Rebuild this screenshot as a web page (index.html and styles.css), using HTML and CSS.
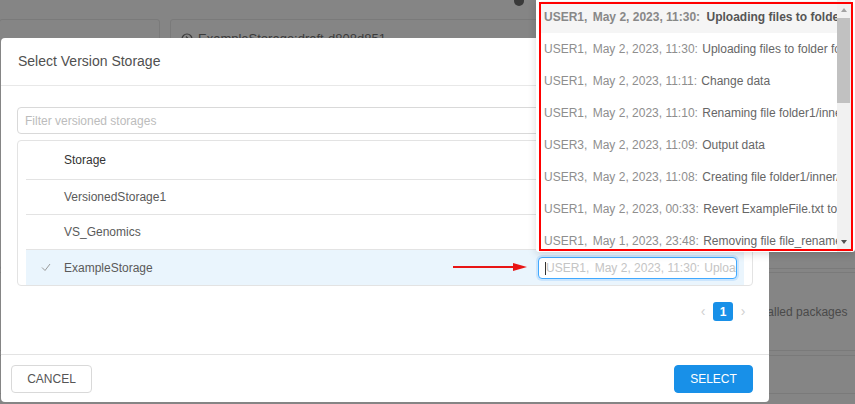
FILE: index.html
```html
<!DOCTYPE html>
<html lang="en">
<head>
<meta charset="utf-8">
<title>Select Version Storage</title>
<link rel="stylesheet" href="styles.css">
</head>
<body>
<div class="page">
  <div class="topbar"><span class="dot"></span></div>
  <div class="cards">
    <div class="card card-a"></div>
    <div class="card card-b">
      <div class="card-title">
        <svg class="card-icon" width="12" height="12" viewBox="0 0 12 12"><circle cx="6" cy="6" r="5" fill="none" stroke="#3b3b3b" stroke-width="1.2"/><path d="M5 3.5 L7.5 6 L5 8.5" fill="none" stroke="#3b3b3b" stroke-width="1.2"/></svg>
        <span>ExampleStorage:draft-d808d851</span>
      </div>
    </div>
  </div>
  <div class="panel">
    <div class="panel-row"><span class="pkg">Installed packages</span></div>
  </div>
  <div class="panel panel-2"></div>
</div>

<div class="modal">
  <div class="modal-header">Select Version Storage</div>
  <div class="modal-body">
    <input class="filter" type="text" placeholder="Filter versioned storages">
    <div class="table">
      <div class="row head">
        <span class="c-check"></span><span class="c-name">Storage</span><span class="c-ver"></span>
      </div>
      <div class="row">
        <span class="c-check"></span><span class="c-name">VersionedStorage1</span><span class="c-ver"></span>
      </div>
      <div class="row">
        <span class="c-check"></span><span class="c-name">VS_Genomics</span><span class="c-ver"></span>
      </div>
      <div class="row selected">
        <span class="c-check"><svg width="10" height="9" viewBox="0 0 10 9"><polyline points="1,4.5 4,7.5 9,1" fill="none" stroke="#9a9a9a" stroke-width="1"/></svg></span>
        <span class="c-name">ExampleStorage</span>
        <span class="c-ver">
          <span class="ver-input"><span class="caret"></span><span class="u">USER1,</span> <span class="d">May 2, 2023, 11:30:</span> <span class="m">Uploading files to folder folder1/inner</span></span>
        </span>
      </div>
    </div>
    <div class="pager">
      <span class="pg-arrow">&#8249;</span>
      <span class="pg-num">1</span>
      <span class="pg-arrow">&#8250;</span>
    </div>
  </div>
  <div class="modal-footer">
    <button class="btn">CANCEL</button>
    <button class="btn primary">SELECT</button>
  </div>
</div>

<div class="dropdown">
  <div class="dd-list">
    <div class="dd-item active"><span class="u">USER1,</span> <span class="d">May 2, 2023, 11:30:</span> <span class="m">Uploading files to folder folder1/inner</span></div>
    <div class="dd-item"><span class="u">USER1,</span> <span class="d">May 2, 2023, 11:30:</span> <span class="m">Uploading files to folder folder1</span></div>
    <div class="dd-item"><span class="u">USER1,</span> <span class="d">May 2, 2023, 11:11:</span> <span class="m">Change data</span></div>
    <div class="dd-item"><span class="u">USER1,</span> <span class="d">May 2, 2023, 11:10:</span> <span class="m">Renaming file folder1/inner/file.txt</span></div>
    <div class="dd-item"><span class="u">USER3,</span> <span class="d">May 2, 2023, 11:09:</span> <span class="m">Output data</span></div>
    <div class="dd-item"><span class="u">USER3,</span> <span class="d">May 2, 2023, 11:08:</span> <span class="m">Creating file folder1/inner/file.txt</span></div>
    <div class="dd-item"><span class="u">USER1,</span> <span class="d">May 2, 2023, 00:33:</span> <span class="m">Revert ExampleFile.txt to version</span></div>
    <div class="dd-item"><span class="u">USER1,</span> <span class="d">May 1, 2023, 23:48:</span> <span class="m">Removing file file_renamed.txt</span></div>
  </div>
  <div class="dd-scroll">
    <span class="sb-up"></span>
    <span class="sb-thumb"></span>
    <span class="sb-down"></span>
  </div>
</div>
<div class="annot-frame"></div>
<svg class="annot-arrow" width="80" height="14" viewBox="0 0 80 14">
  <line x1="3" y1="7" x2="66" y2="7" stroke="#e81515" stroke-width="2"/>
  <polygon points="63,3 77,7 63,11" fill="#e81515"/>
</svg>
</body>
</html>
```

FILE: styles.css
```css
* { box-sizing: border-box; }
html, body { margin: 0; padding: 0; }
body {
  width: 855px;
  height: 404px;
  overflow: hidden;
  position: relative;
  background: #858585;
  font-family: "Liberation Sans", Arial, sans-serif;
  font-size: 12px;
}

/* background page (dimmed) */
.page { width: 855px; }
.topbar { height: 19px; position: relative; }
.dot {
  position: absolute;
  left: 514px;
  top: -4px;
  width: 10px;
  height: 10px;
  border-radius: 50%;
  background: #3a3a3a;
}
.cards {
  display: flex;
  gap: 10px;
  height: 250px;
}
.card {
  border: 1px solid #7a7a7a;
  border-radius: 3px;
  height: 250px;
}
.card-a { width: 161px; margin-left: -1px; }
.card-b { flex: 1; margin-right: -4px; padding: 11px 10px; }
.card-title {
  display: flex;
  align-items: center;
  gap: 5px;
  font-size: 13px;
  color: #3b3b3b;
}
.panel {
  margin-top: 3px;
  border-top: 1px solid #7a7a7a;
  border-bottom: 1px solid #7a7a7a;
  height: 79px;
}
.panel-row {
  height: 77px;
  display: flex;
  align-items: center;
  padding-left: 748px;
}
.pkg { color: #4a4a4a; font-size: 12px; white-space: nowrap; }
.panel-2 { margin-top: 4px; height: 39px; border-bottom: 1px solid #7a7a7a; }

/* modal */
.modal {
  position: absolute;
  left: 1px;
  top: 38px;
  width: 768px;
  height: 364px;
  background: #fff;
  border-radius: 4px;
  display: flex;
  flex-direction: column;
}
.modal-header {
  height: 48px;
  flex: none;
  border-bottom: 1px solid #e8e8e8;
  display: flex;
  align-items: center;
  padding: 0 17px 1px;
  font-size: 14px;
  color: #505050;
}
.modal-body {
  flex: 1;
  padding: 21px 16px 0 16px;
  display: flex;
  flex-direction: column;
}
.filter {
  height: 27px;
  width: 100%;
  border: 1px solid #d9d9d9;
  border-radius: 4px;
  padding: 0 7px;
  font-family: "Liberation Sans", Arial, sans-serif;
  font-size: 12px;
  color: #555;
  outline: none;
  flex: none;
}
.filter::placeholder { color: #bcbcbc; }
.table {
  margin-top: 6px;
  border: 1px solid #e3e3e3;
  border-radius: 4px;
  padding: 0 8px;
  flex: none;
}
.row {
  display: grid;
  grid-template-columns: 38px 474px 1fr;
  align-items: center;
  height: 35px;
  border-bottom: 1px solid #e3e3e3;
  color: #5a5a5a;
}
.row.head { height: 39px; color: #333; }
.row.selected { border-bottom: none; background: #eaf5fd; height: 35px; }
.c-check { display: flex; justify-content: center; align-items: center; padding-left: 2px; }
.c-name { white-space: nowrap; }
.c-ver { display: flex; align-items: center; }
.ver-input {
  position: relative;
  display: block;
  width: 199px;
  height: 22px;
  line-height: 20px;
  border: 1px solid #40a9ff;
  border-radius: 4px;
  box-shadow: 0 0 0 2px rgba(24, 144, 255, 0.15);
  background: #fff;
  padding: 0 14px 0 7px;
  white-space: nowrap;
  overflow: hidden;
  color: #c4c4c4;
}
.ver-input .caret {
  position: absolute;
  left: 6px;
  top: 4px;
  width: 1px;
  height: 13px;
  background: #333;
}
.u { margin-right: 2px; }
.d { margin-right: 1px; }

.pager {
  margin-top: 16px;
  display: flex;
  justify-content: flex-end;
  align-items: center;
  height: 19px;
}
.pg-arrow {
  width: 20px;
  text-align: center;
  color: #cfcfcf;
  font-size: 14px;
  line-height: 19px;
}
.pg-num {
  width: 20px;
  height: 19px;
  border-radius: 3px;
  background: #1890e8;
  color: #fff;
  font-weight: bold;
  font-size: 12px;
  display: flex;
  align-items: center;
  justify-content: center;
}

.modal-footer {
  flex: none;
  height: 48px;
  border-top: 1px solid #e3e3e3;
  padding: 10px 16px 9px 10px;
  display: flex;
  justify-content: space-between;
  align-items: flex-start;
}
.btn {
  height: 28px;
  width: 81px;
  border: 1px solid #d9d9d9;
  border-radius: 4px;
  background: #fff;
  color: #555;
  font-family: "Liberation Sans", Arial, sans-serif;
  font-size: 12px;
  padding: 0;
}
.btn.primary {
  width: 79px;
  background: #1890e8;
  border-color: #1890e8;
  color: #fff;
}

/* dropdown list */
.dropdown {
  position: absolute;
  left: 536px;
  top: 0;
  width: 319px;
  height: 252px;
  background: #fff;
  box-shadow: 0 2px 8px rgba(0, 0, 0, 0.15);
  border-radius: 0 0 3px 3px;
  display: flex;
  padding: 1px 4px 0 5px;
  overflow: hidden;
}
.dd-list { width: 296px; overflow: hidden; }
.dd-item {
  height: 32px;
  line-height: 32px;
  white-space: nowrap;
  overflow: hidden;
  padding-left: 3px;
  color: #8e8e8e;
}
.dd-item .m { color: #666; }
.dd-item.active { background: #f5f5f5; font-weight: bold; color: #888; }
.dd-item.active .d { margin-right: 3px; }
.dd-item.active .m { color: #555; }
.dd-scroll {
  width: 14px;
  background: #f1f1f1;
  position: relative;
  margin-top: -1px;
  height: 252px;
}
.sb-thumb {
  position: absolute;
  left: 0;
  top: 18px;
  width: 13px;
  height: 85px;
  background: #c1c1c1;
}
.sb-up, .sb-down {
  position: absolute;
  left: 4px;
  width: 0;
  height: 0;
  border-left: 3.5px solid transparent;
  border-right: 3.5px solid transparent;
}
.sb-up { top: 8px; border-bottom: 4px solid #a3a3a3; }
.sb-down { top: 240px; border-top: 4px solid #505050; }

/* annotations */
.annot-frame {
  position: absolute;
  left: 539px;
  top: 2px;
  width: 314px;
  height: 249px;
  border: 2px solid #f00;
  pointer-events: none;
}
.annot-arrow {
  position: absolute;
  left: 450px;
  top: 260px;
}
```
